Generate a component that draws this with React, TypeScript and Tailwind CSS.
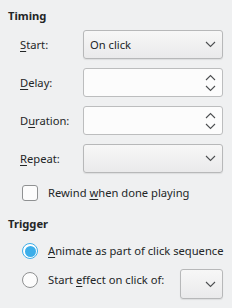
import React from "react";

const Chevron = ({ up = false }: { up?: boolean }) => (
  <svg width="11" height="7" viewBox="0 0 11 7" className="block">
    <path
      d={up ? "M1 6 L5.5 1.5 L10 6" : "M1 1 L5.5 5.5 L10 1"}
      fill="none"
      stroke="#4d4f51"
      strokeWidth="1.1"
    />
  </svg>
);

const Combo = ({ text, className = "" }: { text?: string; className?: string }) => (
  <div
    className={`flex shrink-0 items-center justify-between rounded-[3px] border border-[#b7b8b9] bg-gradient-to-b from-[#f7f7f7] to-[#eaeaeb] pl-[6px] pr-[6px] shadow-[0_1px_1px_rgba(0,0,0,0.08)] ${className}`}
  >
    <span>{text}</span>
    <Chevron />
  </div>
);

const Spin = () => (
  <div className="flex h-[29px] w-[140px] shrink-0 items-center justify-end rounded-[3px] border border-[#bcbdbe] bg-[#fcfcfc] pr-[6px]">
    <div className="flex flex-col gap-[4px]">
      <Chevron up />
      <Chevron />
    </div>
  </div>
);

const Row = ({ label, children }: { label: React.ReactNode; children: React.ReactNode }) => (
  <div className="flex h-[29px] items-center">
    <div className="w-[83px] shrink-0 whitespace-nowrap pl-[20px]">{label}</div>
    {children}
  </div>
);

export default function App() {
  return (
    <div
      className="h-[308px] w-[232px] overflow-hidden whitespace-nowrap bg-[#eff0f1] text-[11.2px] leading-[16px] text-[#232627]"
      style={{ fontFamily: '"Noto Sans", sans-serif' }}
    >
      <div className="pl-[8px] pt-[8px] font-bold">Timing</div>
      <div className="mt-[6px] flex flex-col gap-[9px]">
        <Row label={<><u className="underline-offset-2">S</u>tart:</>}>
          <Combo text="On click" className="h-[29px] w-[140px]" />
        </Row>
        <Row label={<><u className="underline-offset-2">D</u>elay:</>}>
          <Spin />
        </Row>
        <Row label={<>D<u className="underline-offset-2">u</u>ration:</>}>
          <Spin />
        </Row>
        <Row label={<><u className="underline-offset-2">R</u>epeat:</>}>
          <Combo className="h-[29px] w-[140px]" />
        </Row>
      </div>
      <div className="mt-[12px] flex items-center pl-[22px]">
        <div className="h-[16px] w-[16px] shrink-0 rounded-[3px] border border-[#8f9192] bg-[#fcfcfc]" />
        <span className="ml-[10px]">
          Rewind <u className="underline-offset-2">w</u>hen done playing
        </span>
      </div>
      <div className="mt-[15px] pl-[8px] font-bold">Trigger</div>
      <div className="mt-[9px] flex h-[20px] items-center pl-[22px]">
        <div className="flex h-[16px] w-[16px] shrink-0 items-center justify-center rounded-full border border-[#3daee9] bg-white">
          <div className="h-[11px] w-[11px] rounded-full bg-[#3daee9]" />
        </div>
        <span className="ml-[10px]">
          <u className="underline-offset-2">A</u>nimate as part of click sequence
        </span>
      </div>
      <div className="mt-[8px] flex items-start pl-[22px]">
        <div className="flex h-[22px] items-center">
          <div className="h-[16px] w-[16px] shrink-0 rounded-full border border-[#8f9192] bg-[#fcfcfc]" />
          <span className="ml-[10px]">
            Start <u className="underline-offset-2">e</u>ffect on click of:
          </span>
        </div>
        <Combo className="ml-auto mr-[9px] h-[30px] w-[43px] justify-end" />
      </div>
    </div>
  );
}
